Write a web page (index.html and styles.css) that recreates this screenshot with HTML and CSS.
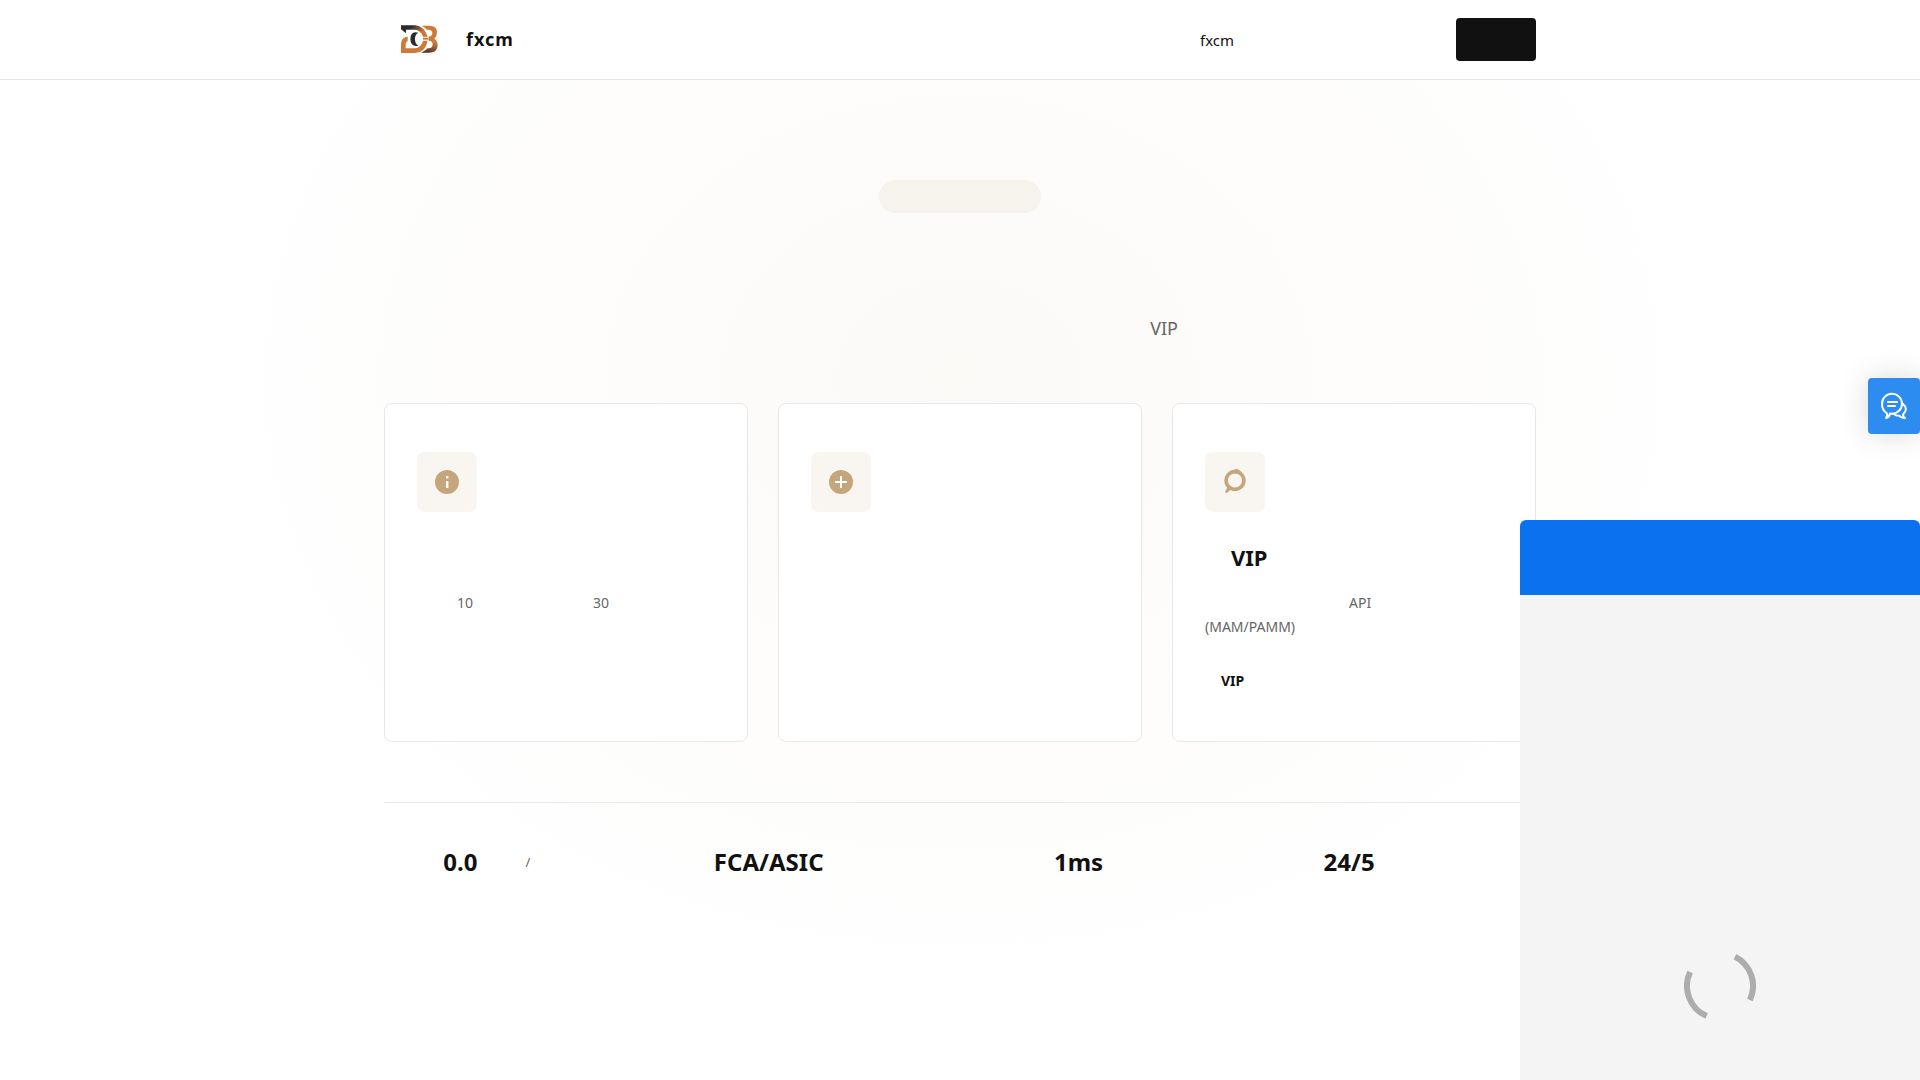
FILE: index.html
```html
<!DOCTYPE html>
<html lang="zh-CN">
<head>
    <meta charset="UTF-8">
    <meta name="viewport" content="width=device-width, initial-scale=1.0">
    <title>fxcm</title>
    <link rel="stylesheet" href="styles.css">
</head>
<body>
    <header class="header">
        <div class="container header-inner">
            <a class="brand" href="#">
                <svg class="logo" viewBox="0 0 111 84">
                    <defs>
                        <linearGradient id="topFade" x1="0" y1="0" x2="1" y2="0.5">
                            <stop offset="0.35" stop-color="#2b2b2d"/>
                            <stop offset="0.85" stop-color="#c8763a"/>
                        </linearGradient>
                        <linearGradient id="sideFade" x1="0.3" y1="0" x2="0.1" y2="1">
                            <stop offset="0.5" stop-color="#cf7a38"/>
                            <stop offset="1" stop-color="#3a2c26"/>
                        </linearGradient>
                    </defs>
                    <path d="M62 2H86Q108 3 108 22Q108 34 100 41Q110 48 110 60Q110 82 86 83H61Q74 77 80 70H84Q95 69 95 58Q95 47 83 47V35Q94 34 94 25Q94 14 82 14H78Q71 6 62 2Z" fill="url(#sideFade)"/>
                    <path d="M0 1H42Q70 4 80 35H66Q60 15 40 14H15V25L0 13Z" fill="url(#topFade)"/>
                    <path d="M0 84V56Q1 39 16 35H20V48Q14 50 14 58V70H42Q60 69 66 47H80Q74 81 42 84Z" fill="#cf7a38"/>
                    <path d="M52 23Q29 16 28 42Q29 67 52 62Q42 57 42 42Q42 27 52 23Z" fill="#2b2b2d"/>
                    <path d="M66 38H82V44H66Z" fill="#cf7a38"/>
                </svg>
                <span class="brand-name">fxcm</span>
            </a>
            <nav class="nav">
                <a href="#">fxcm</a>
            </nav>
            <button class="header-button" type="button"></button>
        </div>
    </header>

    <main class="hero">
        <div class="container">
            <div class="hero-tag"></div>
            <p class="hero-text">VIP</p>

            <div class="cards">
                <div class="card">
                    <div class="card-icon">
                        <svg viewBox="0 0 24 24">
                            <circle cx="12" cy="12" r="12" fill="#c5a67c"/>
                            <path d="M11 6h2.4v2.4H11zM11 11h2.4v7H11z" fill="#fff"/>
                        </svg>
                    </div>
                    <h3></h3>
                    <p><span class="min">10</span><span class="max">30</span></p>
                </div>
                <div class="card">
                    <div class="card-icon">
                        <svg viewBox="0 0 24 24">
                            <circle cx="12" cy="12" r="12" fill="#c5a67c"/>
                            <path d="M11 6h2v5h5v2h-5v5h-2v-5H6v-2h5z" fill="#fff"/>
                        </svg>
                    </div>
                </div>
                <div class="card">
                    <div class="card-icon">
                        <svg viewBox="0 0 24 24">
                            <circle cx="12" cy="10.500" r="8.900" fill="none" stroke="#c5a67c" stroke-width="3.600"/>
                            <path d="M11 0Q13-2 16 0L18 2L12 4ZM1.500 12Q5 15 4 18L2 22Q3 24 5 22L8 19.500Q12 20 16 19L9 18L5 15Z" fill="#c5a67c"/>
                        </svg>
                    </div>
                    <h3>VIP</h3>
                    <p><span class="api">API</span><br>(MAM/PAMM)</p>
                    <a class="card-link" href="#">VIP</a>
                </div>
            </div>

            <div class="stats">
                <div class="stat"><strong>0.0</strong><span class="stat-label long">/</span></div>
                <div class="stat"><strong>FCA/ASIC</strong><span class="stat-label medium"></span></div>
                <div class="stat"><strong>1ms</strong><span class="stat-label"></span></div>
                <div class="stat"><strong>24/5</strong><span class="stat-label"></span></div>
            </div>
        </div>
    </main>

    <!-- Chat -->
    <button class="chat-button" type="button">
        <svg viewBox="0 0 28 28" fill="none" stroke="#fff" stroke-width="2" stroke-linecap="round" stroke-linejoin="round">
            <path d="M8 21.500Q3 18 3 12A10 10 0 1 1 13.500 21.700L11 21.500Q10.500 25 7 26Q8.500 24 8 21.500Z"/>
            <path d="M9 10h9M9 14h7"/>
            <path d="M23.500 11.500Q30 17 24 22.500Q24 24.500 26 26Q22 26 20.500 23.800Q17 24 15 22"/>
        </svg>
    </button>
    <aside class="chat">
        <div class="chat-header"></div>
        <div class="chat-body">
            <svg class="spinner" viewBox="0 0 72 72" fill="none" stroke="#adadad" stroke-width="6">
                <path d="M51 6.600A33 33 0 0 1 65.900 50"/>
                <path d="M22.600 66.100A33 33 0 0 1 6.100 22"/>
            </svg>
        </div>
    </aside>
</body>
</html>
```
FILE: styles.css
```css
* {
    box-sizing: border-box;
    margin: 0;
    padding: 0;
}
body {
    font-family: "Noto Sans", "Noto Sans CJK SC", sans-serif;
    background-color: #fff;
    color: #111;
    overflow: hidden;
}
a {
    color: inherit;
    text-decoration: none;
}
.container {
    max-width: 1200px;
    margin: 0 auto;
    padding: 0 24px;
}

/* Header */
.header {
    background-color: #fff;
    border-bottom: 1px solid #e5e5e5;
}
.header-inner {
    display: flex;
    align-items: center;
    height: 79px;
}
.brand {
    display: flex;
    align-items: center;
    gap: 28px;
    padding: 0 0 2px 17px;
    margin-right: auto;
}
.logo {
    width: 37px;
    height: 28px;
}
.brand-name {
    font-size: 18px;
    font-weight: 700;
    letter-spacing: 1px;
}
.nav {
    margin-right: 222px;
    font-size: 15px;
}
.header-button {
    width: 80px;
    height: 43px;
    background-color: #111;
    border: none;
    border-radius: 4px;
    cursor: pointer;
}

/* Hero */
.hero {
    min-height: calc(100vh - 80px);
    padding: 100px 0 60px;
    background: radial-gradient(800px 650px at 50% 300px, rgba(197, 166, 124, 0.06), transparent);
}
.hero-tag {
    width: 162px;
    height: 33px;
    margin: 0 auto 100px;
    border-radius: 17px;
    background-color: rgba(197, 166, 124, 0.1);
}
.hero-text {
    max-width: 640px;
    margin: 0 auto 60px;
    padding-right: 102px;
    font-size: 18px;
    line-height: 30px;
    color: #666;
    text-align: right;
}

/* Cards */
.cards {
    display: grid;
    grid-template-columns: repeat(3, 1fr);
    gap: 30px;
}
.card {
    padding: 48px 32px;
    background-color: #fff;
    border: 1px solid #e8e8e8;
    border-radius: 8px;
}
.card-icon {
    display: flex;
    align-items: center;
    justify-content: center;
    width: 60px;
    height: 60px;
    margin-bottom: 30px;
    border-radius: 8px;
    background-color: #f9f6f2;
}
.card-icon svg {
    width: 24px;
    height: 24px;
    overflow: visible;
}
.card h3 {
    min-height: 30px;
    margin-bottom: 19px;
    padding-left: 26px;
    font-size: 22px;
    line-height: 30px;
}
.card p {
    margin-bottom: 29px;
    font-size: 14px;
    line-height: 24px;
    color: #666;
}
.min {
    padding-left: 40px;
}
.max {
    padding-left: 120px;
}
.api {
    padding-left: 144px;
}
.card-link {
    display: block;
    padding-left: 16px;
    font-size: 14px;
    font-weight: 700;
    line-height: 25px;
}

/* Stats */
.stats {
    display: flex;
    justify-content: space-around;
    margin-top: 60px;
    padding-top: 40px;
    border-top: 1px solid #e8e8e8;
}
.stat {
    display: flex;
    align-items: center;
    gap: 12px;
}
.stat strong {
    font-size: 24px;
    line-height: 38px;
}
.stat-label {
    width: 90px;
    padding-left: 36px;
    font-size: 13px;
    color: #666;
}
.stat-label.medium {
    width: 100px;
}
.stat-label.long {
    width: 106px;
}

/* Chat */
.chat-button {
    position: fixed;
    top: 35%;
    right: 0;
    display: flex;
    align-items: center;
    justify-content: center;
    width: 52px;
    height: 56px;
    padding-right: 3px;
    border: none;
    border-radius: 4px;
    background-color: #2d8cf0;
    box-shadow: 0 0 30px rgba(0, 0, 0, 0.15);
    cursor: pointer;
}
.chat-button svg {
    width: 28px;
    height: 28px;
}
.chat {
    position: fixed;
    right: 0;
    bottom: 0;
    display: flex;
    flex-direction: column;
    width: 400px;
    height: 560px;
    border-radius: 6px 6px 0 0;
    overflow: hidden;
}
.chat-header {
    height: 75px;
    background-color: #0b71ee;
}
.chat-body {
    flex: 1;
    display: flex;
    align-items: flex-end;
    justify-content: center;
    padding-bottom: 58px;
    background-color: #f4f4f4;
}
.spinner {
    width: 72px;
    height: 72px;
}
```
